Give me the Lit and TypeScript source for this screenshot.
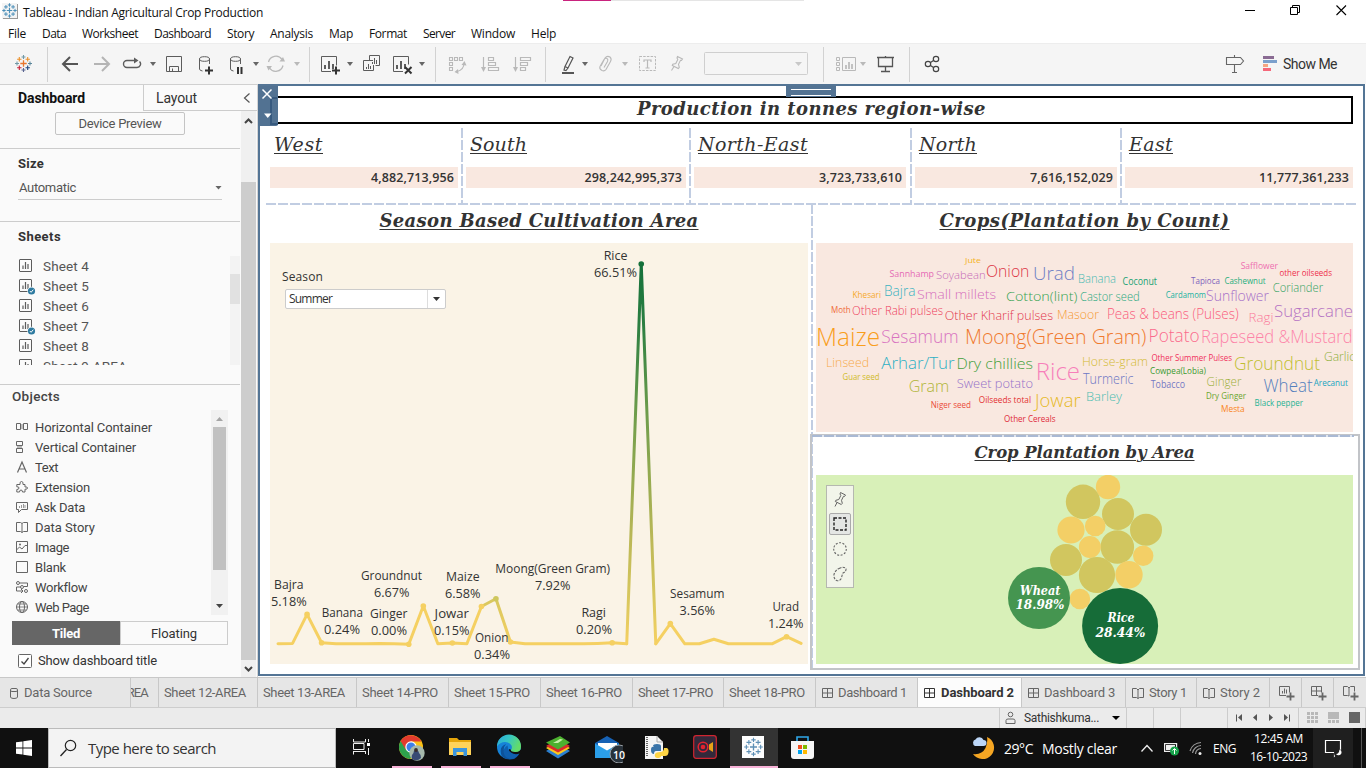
import { LitElement, html, svg, css } from "lit";
import { customElement, property } from "lit/decorators.js";

/* A line of text whose tracking is set so that it fills a given width. */
@customElement("fit-text")
class FitText extends LitElement {
  @property({ type: Number }) w = 0;
  @property() text = "";
  static styles = css`
    :host { display: block; white-space: pre; flex: none; }
  `;
  render() {
    return html`<span>${this.text}</span>`;
  }
  firstUpdated() {
    const s = this.renderRoot.querySelector("span") as HTMLElement;
    if (this.w) {
      const n = s.getBoundingClientRect().width;
      this.style.letterSpacing = `${(this.w - n) / this.text.length}px`;
    }
  }
}

const t = (text: string, w: number, cls = "") => html`<fit-text class=${cls} .text=${text} .w=${w}></fit-text>`;
const ic = (x: number, y: number, w: number, h: number, body: unknown) =>
  html`<svg class="ic" width=${w} height=${h} viewBox="${x} ${y} ${w} ${h}" fill="none">${body}</svg>`;

const plus = (x: number, y: number, r: number, c: string, sw = 1) =>
  svg`<path d="M${x - r} ${y}H${x + r}M${x} ${y - r}V${y + r}" stroke=${c} stroke-width=${sw}/>`;

const tableauMark = (x: number, y: number, s: number, cs: string[], sw = 1) => svg`
  ${plus(x, y, 3.2 * s, cs[0], sw * 1.2)}
  ${plus(x, y - 6.5 * s, 2 * s, cs[1], sw)}${plus(x, y + 6.5 * s, 2 * s, cs[2], sw)}
  ${plus(x - 6.5 * s, y, 2 * s, cs[3], sw)}${plus(x + 6.5 * s, y, 2 * s, cs[4], sw)}
  ${plus(x - 4.2 * s, y - 4.2 * s, 2.2 * s, cs[5], sw)}${plus(x + 4.2 * s, y - 4.2 * s, 2.2 * s, cs[6], sw)}
  ${plus(x - 4.2 * s, y + 4.2 * s, 2.2 * s, cs[7], sw)}${plus(x + 4.2 * s, y + 4.2 * s, 2.2 * s, cs[8], sw)}`;
const blues = (c: string) => Array(9).fill(c);

const D = "#5c5c5c";
const L = "#b9b9b9";
const caret = (x: number, c = "#666") => ic(x, 43, 8, 41, svg`<path d="M${x + 1} 62h6l-3 4z" fill=${c}/>`);
const sep = () => html`<i class="sep"></i>`;
const bars = (x: number, y: number, c: string) =>
  svg`<path d="M${x} ${y}v-4M${x + 4} ${y}v-8M${x + 8} ${y}v-5" stroke=${c} stroke-width="2"/>`;

const toolbar = () => html`
  ${ic(12, 43, 24, 41, tableauMark(23.5, 63.5, 1, ["#e8762c", "#7199a6", "#5b6591", "#7199a6", "#5b879b", "#eb912c", "#eb912c", "#c72037", "#1f457e"], 1.1))}
  ${sep()}
  ${ic(60, 43, 20, 41, svg`<path d="M78 64H63.5M70 57l-7 7 7 7" stroke="#555" stroke-width="2"/>`)}
  ${ic(92, 43, 20, 41, svg`<path d="M94 64h14.500M102 57l7 7-7 7" stroke="#b4b4b4" stroke-width="2"/>`)}
  ${ic(122, 43, 20, 41, svg`<path d="M135 60.500H127a3.500 3.500 0 0 0 0 7h10a3.500 3.500 0 0 0 2.500-6" stroke=${D} stroke-width="1.400"/><path d="M134 57.500l4.500 3-4.500 3z" fill=${D}/>`)}
  ${caret(149)}
  ${ic(165, 43, 18, 41, svg`<path d="M166.500 56.500h15v15h-15zM169.500 71.500v-5h9v5M172.500 71v-2.500" stroke=${D}/>`)}
  ${ic(197, 43, 18, 41, svg`<ellipse cx="204.500" cy="59" rx="5" ry="2.300" stroke=${D}/><path d="M199.500 59v10q0 1.500 3 2M209.500 59v5" stroke=${D}/><path d="M205 70.500h8M209 66.500v8" stroke="#333" stroke-width="2"/>`)}
  ${ic(228, 43, 18, 41, svg`<ellipse cx="235.500" cy="59" rx="5" ry="2.300" stroke=${D}/><path d="M230.500 59v10q0 1.500 3 2M240.500 59v5" stroke=${D}/><path d="M238 67v7M241.500 67v7" stroke="#333" stroke-width="2"/>`)}
  ${caret(252)}
  ${ic(266, 43, 20, 41, svg`<path d="M268.500 62a7.500 7.500 0 0 1 13.500-2.500M283 65.500a7.500 7.500 0 0 1-13.500 2.500" stroke=${L} stroke-width="1.300"/><path d="M279.500 61.500h5.500l-2-4.500zM272 66h-5.500l2 4.500z" fill=${L}/>`)}
  ${caret(293, L)}${sep()}
  ${ic(320, 43, 22, 41, svg`<path d="M331 71.500h-9.500v-15h15v9" stroke=${D}/>${bars(325, 69, D)}<path d="M332 70.500h8M336 66.500v8" stroke="#333" stroke-width="2"/>`)}
  ${caret(346)}
  ${ic(362, 43, 20, 41, svg`<path d="M369.500 60v-4.500h10v10h-4M373 60.500h-9.500v10h10V65" stroke=${D}/><path d="M372.500 64v-2M374.500 64v-6M376.500 64v-4M366.500 69v-2M368.500 69v-5M370.500 69v-3" stroke=${D}/>`)}
  ${ic(392, 43, 22, 41, svg`<path d="M403 71.500h-9.500v-15h15v8" stroke=${D}/>${bars(397, 69, D)}<path d="M405 67l6.500 6.500M411.500 67l-6.500 6.500" stroke="#333" stroke-width="2"/>`)}
  ${caret(418)}${sep()}
  ${ic(448, 43, 20, 41, svg`<path d="M449.500 57.500h3v3h-3zM454.500 57.500h3v3h-3zM459.500 57.500h3v3h-3zM449.500 62.500h3v3h-3zM449.500 67.500h3v3h-3zM464 63q0 7-7 8.500" stroke=${L} stroke-width="1.100"/><path d="M461.500 65l3-4 2 4.500zM458 69l-3.500 3 4 2z" fill=${L}/>`)}
  ${ic(480, 43, 20, 41, svg`<path d="M483.500 57v12M488.500 57.500h5v3h-5zM488.500 62.500h7v3h-7zM488.500 67.500h10v3h-10z" stroke=${L} stroke-width="1.200"/><path d="M481 67h5l-2.500 5z" fill=${L}/>`)}
  ${ic(512, 43, 20, 41, svg`<path d="M515.500 57v12M520.500 57.500h10v3h-10zM520.500 62.500h7v3h-7zM520.500 67.500h5v3h-5z" stroke=${L} stroke-width="1.200"/><path d="M513 67h5l-2.500 5z" fill=${L}/>`)}
  ${sep()}
  ${ic(560, 43, 18, 41, svg`<path d="M570 56.500l3 1.500-5 10-3-1.500zM565 66.500l-1 3.500 2 .5 2-2.500" stroke="#555" stroke-width="1.200"/><path d="M562 73h12" stroke="#555" stroke-width="2"/>`)}
  ${caret(581)}
  ${ic(598, 43, 16, 41, svg`<path d="M601 66l4-8q2-2.500 5-1 2 2 .5 4.500l-4.500 8q-1.500 2-4 1-3-1.500-2-4l4-7q1.500-2 3-1 1.500 1 .5 3l-3.500 6" stroke=${L} stroke-width="1.100"/>`)}
  ${caret(621, L)}
  ${ic(638, 43, 20, 41, svg`<path d="M639.500 56.500h16v14h-16z" stroke=${L} stroke-dasharray="2.500 1.200"/><path d="M644 62v-2h7v2M647.500 60v8M645.500 68h4" stroke=${L} stroke-width="1.200"/>`)}
  ${ic(669, 43, 18, 41, svg`<path d="M677.500 56.500l5 2.500-1 1.500-1-.2-2 4 .8 3-1 1.200-6-3 .5-1.200 3-.8 2-4-.8-1.500zM674 66.500l-2.500 4" stroke=${L} stroke-width="1.100"/>`)}
  ${ic(704, 43, 106, 41, svg`<rect x="704.500" y="52.500" width="103" height="22" rx="1" stroke="#cfcfcf"/><path d="M795 62h7l-3.500 4z" fill="#c8c8c8"/>`)}
  ${sep()}
  ${ic(835, 43, 22, 41, svg`<path d="M836.500 57.500h3v3h-3zM836.500 62.500h3v3h-3zM836.500 67.500h3v3h-3zM842.500 57.500h13v13h-13z" stroke=${L}/><path d="M846 69v-4M849 69v-7M852 69v-5" stroke=${L} stroke-width="1.700"/>`)}
  ${caret(859, L)}
  ${ic(876, 43, 20, 41, svg`<path d="M877 57.500h17M878.500 58v8.500h14V58M885.500 56v1M885.500 67v4M881 71.500h9" stroke="#555" stroke-width="1.300"/>`)}
  ${sep()}
  ${ic(924, 43, 18, 41, svg`<g stroke="#444" stroke-width="1.200"><circle cx="928" cy="64" r="2.700"/><circle cx="936" cy="59" r="2.700"/><circle cx="936" cy="69" r="2.700"/><path d="M930.500 62.500l3-2M930.500 65.500l3 2"/></g>`)}
  ${ic(1225, 43, 20, 41, svg`<path d="M1226.500 57.500h14l3 3.500-3 3.500h-14zM1234.500 55v2M1234.500 65v7M1232 72.500h5" stroke="#666" stroke-width="1.100"/>`)}
  <div class="showme">
    ${ic(1263, 43, 15, 41, svg`<path d="M1263 56h11v3h-11z" fill="#8a6b93"/><path d="M1263 60h14v3h-14z" fill="#7ba0cc"/><path d="M1263 64h5v3h-5z" fill="#f4a582"/><path d="M1263 68h8v3h-8z" fill="#f5687a"/>`)}
    ${t("Show Me", 54)}
  </div>`;

const sheetIcon = (used: boolean) => html`<svg class="ic" width="18" height="18" viewBox="0 0 18 18" fill="none">
  <rect x="1.500" y="2.500" width="12" height="12" stroke=${D} rx=".5"/><path d="M5 12V8.500M7.500 12V5M10 12V7" stroke=${D} stroke-width="1.200"/>
  ${used ? svg`<circle cx="13.500" cy="14" r="4.200" fill="#fafafa"/><circle cx="13.500" cy="14" r="3.600" fill="#2f7ba0"/><path d="M11.800 14l1.300 1.300 2.200-2.600" stroke="#fff"/>` : ""}</svg>`;

const sheets: [string, number, boolean][] = [
  ["Sheet 4", 46, false], ["Sheet 5", 46, true], ["Sheet 6", 46, false], ["Sheet 7", 46, true], ["Sheet 8", 46, false], ["Sheet 9-AREA", 84, false],
];

const G = "#666";
const objects: [string, number, unknown][] = [
  ["Horizontal Container", 117, svg`<path d="M.5 3.500h4v6h-4zM7.500 3.500h4v6h-4z" stroke=${G}/><path d="M5 4h2v5H5z" fill="#bbb"/>`],
  ["Vertical Container", 101, svg`<path d="M.5 1.500h6v4h-6zM.5 8.500h6v4h-6z" stroke=${G}/><path d="M1 6h5v2H1z" fill="#bbb"/>`],
  ["Text", 23, svg`<path d="M1.500 12.500L6 2l4.500 10.500M3 9h6" stroke=${G} stroke-width="1.200"/>`],
  ["Extension", 55, svg`<path d="M4 4.500q-.5-3 1.500-3t1.500 3h2v2.500q2.500-.5 2.500 1t-2.500 1.200v2.800H6.500q0-2-1.500-2t-1.500 2H.8V9.500Q3 9.500 3 8T.8 6.800V4.500z" stroke=${G}/>`],
  ["Ask Data", 50, svg`<path d="M.5 2.500h11v7h-6l-3 3v-3h-2z" stroke=${G}/><path d="M3.500 8V6M5.500 8V5M7.500 8V4M9 8V5" stroke="#999"/>`],
  ["Data Story", 60, svg`<path d="M6 3.500v9M6 3.500L4.500 2.500h-4v9h4l1.500 1 1.500-1h4v-9h-4z" stroke=${G}/>`],
  ["Image", 34, svg`<path d="M.5 1.500h11v11H.5zM.5 10l3-3 2.500 2 3-3.500h2.500" stroke=${G}/><circle cx="4" cy="4.500" r="1" fill=${G}/>`],
  ["Blank", 31, svg`<path d="M.5 1.500h11v11H.5z" stroke=${G}/>`],
  ["Workflow", 52, svg`<circle cx="2" cy="3" r="1.500" stroke=${G}/><circle cx="10" cy="11" r="1.500" stroke=${G}/><circle cx="6" cy="7" r="1.500" stroke=${G}/><path d="M4 3h7.500v3.500H8M4.500 7h-4v4H7M5 9l2 2-2 2" stroke=${G}/>`],
  ["Web Page", 54, svg`<circle cx="6" cy="7" r="5.500" stroke=${G}/><ellipse cx="6" cy="7" rx="2.500" ry="5.500" stroke=${G}/><path d="M.5 7h11M1.500 4h9M1.500 10h9" stroke=${G} stroke-width=".8"/>`],
];

const sidebar = () => html`
  <aside class="side">
    <div class="side-tabs">
      <div class="st-active">${t("Dashboard", 67)}</div>
      <div class="st-other">${t("Layout", 41)}${ic(243, 90, 8, 14, svg`<path d="M249.500 92.500l-5 4.500 5 4.500" stroke="#555" stroke-width="1.200"/>`)}</div>
    </div>
    <div class="side-body">
      <div class="side-scroll">
        <section class="s-device"><div class="device">${t("Device Preview", 83)}</div></section>
        <section class="s-size">
          <div class="h">${t("Size", 26)}</div>
          <div class="select">${t("Automatic", 57)}<i class="tri"></i></div>
        </section>
        <section class="s-sheets">
          <div class="h">${t("Sheets", 43)}</div>
          <div class="sheetbox">
            <div class="sheetlist">${sheets.map(([n, w, u]) => html`<div class="sheet">${sheetIcon(u)}${t(n, w)}</div>`)}</div>
            <div class="minitrack"><i></i></div>
          </div>
        </section>
        <section class="s-objects">
          <div class="oh">${t("Objects", 48)}</div>
          <div class="objbox">
            <div class="objlist">${objects.map(([n, w, b]) => html`<div class="obj"><svg class="ic" width="12" height="14" viewBox="0 0 12 14" fill="none">${b}</svg>${t(n, w)}</div>`)}</div>
            <div class="objtrack"><b class="up"></b><i></i><b class="down"></b></div>
          </div>
          <div class="toggle"><div class="on">${t("Tiled", 28)}</div><div class="off">${t("Floating", 46)}</div></div>
          <div class="check">${ic(0, 0, 14, 14, svg`<rect x=".5" y=".5" width="13" height="13" rx="1" stroke="#666" fill="#fff"/><path d="M3.500 7.500l2.500 2.500 4.500-6" stroke="#444" stroke-width="1.300"/>`)}${t("Show dashboard title", 119)}</div>
        </section>
      </div>
      <div class="vtrack">
        ${ic(0, 0, 15, 19, svg`<path d="M4 12l3.500-3.500L11 12" stroke="#444" stroke-width="2"/>`)}
        <i></i>
        ${ic(0, 0, 15, 17, svg`<path d="M4 7l3.500 3.500L11 7" stroke="#444" stroke-width="2"/>`)}
      </div>
    </div>
  </aside>`;

const fit = (s: string, x: number, x2: number, y: number, size: number, fill: string) =>
  svg`<text x=${x} y=${y} font-size=${size} font-weight=${size > 11 ? 300 : 400} fill=${fill} textLength=${x2 - x} lengthAdjust="spacingAndGlyphs">${s}</text>`;
const label = (s: string, x: number, x2: number, y: number, size: number, fill: string) =>
  svg`<text x=${x} y=${y} font-size=${size} fill=${fill} textLength=${x2 - x} lengthAdjust="spacingAndGlyphs">${s}</text>`;

/* text, left, right, baseline, size, colour */
const words: [string, number, number, number, number, string][] = [
  ["Jute", 965, 981, 262.7, 8, "#f5b324"], ["Sannhamp", 889.5, 934, 277, 9.5, "#e56bb5"], ["Soyabean", 936, 985.6, 279, 11.5, "#c76cb9"],
  ["Onion", 986, 1029.4, 277.3, 17, "#dc3545"], ["Urad", 1033, 1075, 280, 19, "#6f7fc4"], ["Banana", 1078, 1116, 283, 12, "#45b8b0"],
  ["Coconut", 1122.6, 1157, 285, 10, "#20a374"], ["Safflower", 1240.7, 1278, 269, 9, "#ee6fb0"], ["other oilseeds", 1279.5, 1332, 276, 9, "#ee2f4c"],
  ["Tapioca", 1191, 1220, 283.5, 9, "#8065bd"], ["Cashewnut", 1224.4, 1265.7, 284, 9, "#1fae7d"], ["Coriander", 1272.8, 1323, 292, 12.5, "#32a363"],
  ["Khesari", 852.5, 881, 298, 9, "#f6a92b"], ["Bajra", 884, 915.5, 295.5, 14, "#3bb3c0"], ["Small millets", 917, 996, 298.500, 13.5, "#d56fbd"],
  ["Cotton(lint)", 1006, 1077.4, 301, 13.5, "#35a351"], ["Castor seed", 1080, 1139.7, 300.5, 12, "#2aa981"], ["Cardamom", 1165.7, 1206, 298, 9, "#20b2a0"],
  ["Sunflower", 1206, 1269, 301, 14, "#a873c9"], ["Moth", 831, 850.7, 313, 9, "#ef6a3a"], ["Other Rabi pulses", 852, 943, 314.5, 13, "#ee3c5c"],
  ["Other Kharif pulses", 944.7, 1053, 319.5, 13, "#e2364b"], ["Masoor", 1057, 1099, 319, 13, "#f59a33"], ["Peas & beans (Pulses)", 1107, 1238.6, 319, 14, "#f95b7c"],
  ["Ragi", 1248.6, 1273.5, 322, 13.5, "#fb7c9c"], ["Sugarcane", 1274, 1353, 316.5, 17, "#b573c3"], ["Maize", 816, 880, 346, 25, "#f99e1c"],
  ["Sesamum", 881.3, 958.5, 342.5, 18, "#d873c0"], ["Moong(Green Gram)", 965, 1146.4, 344, 20, "#f07a2e"], ["Potato", 1148.6, 1199.5, 341.5, 18, "#fb6a8c"],
  ["Rapeseed &Mustard", 1201, 1352.5, 343, 18, "#fd83a8"], ["Linseed", 826, 869, 367, 13, "#f7ab4c"], ["Arhar/Tur", 881.3, 954.6, 369, 17, "#2eb0c4"],
  ["Dry chillies", 956.4, 1033, 369, 15, "#45a03d"], ["Rice", 1035.8, 1080, 379.5, 24, "#f77fba"], ["Horse-gram", 1082, 1148, 365.5, 13, "#d3bb35"],
  ["Other Summer Pulses", 1151.4, 1232, 361, 9, "#f0305c"], ["Cowpea(Lobia)", 1150, 1206, 374, 9, "#3a9a2f"], ["Groundnut", 1234, 1320, 369.5, 19, "#bfbf30"],
  ["Garlic", 1324, 1355, 361, 13, "#8dae38"], ["Guar seed", 842.5, 879.5, 380, 9, "#d0bb27"], ["Gram", 908.7, 949.3, 392, 17, "#b0b537"],
  ["Sweet potato", 956.8, 1033, 388, 13, "#9471c9"], ["Turmeric", 1083, 1133.6, 384, 14, "#6c76c4"], ["Tobacco", 1150.7, 1185, 388, 11, "#7579c4"],
  ["Ginger", 1206.6, 1241.5, 386, 13, "#9cb03a"], ["Wheat", 1263.5, 1312.6, 392, 18, "#5580bd"], ["Arecanut", 1313.7, 1348, 386, 9, "#20a5c0"],
  ["Niger seed", 930.8, 971, 408, 9, "#ea4b3a"], ["Oilseeds total", 978.8, 1031, 403, 9, "#e33030"], ["Jowar", 1035, 1080.6, 407, 18, "#e6b91f"],
  ["Barley", 1086, 1122, 401, 13, "#4abdb0"], ["Dry Ginger", 1206, 1246, 399, 9.5, "#6aa52f"], ["Mesta", 1221, 1244.7, 412, 9.5, "#fa8420"],
  ["Black pepper", 1254.6, 1303, 406, 9.5, "#25b394"], ["Other Cereals", 1004, 1055.7, 422, 9, "#e02a3a"],
];

/* share of each crop as the y coordinate of its mark */
const base = 643.8;
const series = Array.from({ length: 37 }, () => base);
Object.assign(series, { 1: 643.4, 2: 614.4, 3: 642.7, 7: 643.4, 9: 644.2, 10: 606, 12: 643, 14: 606.5, 15: 598.7, 16: 642, 22: 643.4, 23: 642.8, 25: 264, 27: 623.6, 30: 639.3, 35: 636.7, 36: 643.4 });
const sx = (i: number) => 278 + 14.53 * i;
const run = (a: number, b: number) => series.slice(a, b + 1).map((y, k) => `${sx(a + k)},${y}`).join(" ");
const Y = "#f5d062";

const marks: [string, string, number, number, number, number, number][] = [
  ["Bajra", "5.18%", 274, 303.5, 589, 271, 306.7], ["Banana", "0.24%", 321.7, 363, 617, 324, 360], ["Ginger", "0.00%", 370, 407.4, 618, 371, 407],
  ["Groundnut", "6.67%", 361, 422, 580, 374, 409.5], ["Maize", "6.58%", 446, 479.6, 581, 445, 480.6], ["Jowar", "0.15%", 434.6, 469, 618, 434, 469.6],
  ["Onion", "0.34%", 475, 508.5, 642, 474, 510], ["Moong(Green Gram)", "7.92%", 495.3, 610, 573, 535, 570.6], ["Ragi", "0.20%", 581.4, 606, 617, 576, 612],
  ["Sesamum", "3.56%", 670, 724.5, 598, 679.6, 715], ["Urad", "1.24%", 772.4, 799.2, 611, 768, 803.5], ["Rice", "66.51%", 603.7, 627.5, 260, 594, 637],
];

const lineChart = () => html`<svg class="plot" width="538" height="421" viewBox="270 243 538 421" fill="none">
  <defs><linearGradient id="g" gradientUnits="userSpaceOnUse" x1="0" y1="264" x2="0" y2="644">
    <stop offset="0" stop-color="#14703a"/><stop offset=".16" stop-color="#2b7f42"/><stop offset=".4" stop-color="#6f9d4b"/>
    <stop offset=".73" stop-color="#bcb857"/><stop offset=".88" stop-color="#d8c75e"/><stop offset="1" stop-color="#f5d062"/>
  </linearGradient></defs>
  <g stroke-width="3" stroke-linejoin="round" stroke-linecap="round">
    <polyline points=${run(0, 14)} stroke=${Y}/><polyline points=${run(16, 24)} stroke=${Y}/><polyline points=${run(26, 36)} stroke=${Y}/>
    <polyline points=${run(14, 16)} stroke="url(#g)"/><polyline points=${run(24, 26)} stroke="url(#g)"/>
  </g>
  ${[2, 3, 9, 10, 12, 14, 16, 23, 27, 35].map((i) => svg`<circle cx=${sx(i)} cy=${series[i]} r="2.800" fill=${Y}/>`)}
  <circle cx=${sx(15)} cy=${series[15]} r="2.800" fill="#cfc75d"/><circle cx=${sx(25)} cy=${series[25]} r="2.800" fill="#14703a"/>
  ${marks.map(([n, p, a, b, y, c, d]) => svg`${label(n, a, b, y, 12.5, "#333")}${label(p, c, d, y + 17, 12.5, "#333")}`)}
</svg>`;

const bubbles: [number, number, number, string][] = [
  [1108, 487, 12.2, "#f3cf66"], [1083, 501.8, 17.2, "#d1c65f"], [1118, 514, 16, "#d1c65f"], [1071, 530, 13.6, "#f3cf66"], [1095.2, 526, 10.3, "#f3cf66"],
  [1146, 529.8, 16, "#d1c65f"], [1117.3, 547, 16.8, "#d1c65f"], [1089.9, 547, 11, "#f3cf66"], [1143.2, 555.8, 10.2, "#f3cf66"], [1066, 560, 16, "#d1c65f"],
  [1097, 575, 18.1, "#d1c65f"], [1129, 574.8, 13.7, "#f3cf66"], [1079.9, 599, 10.3, "#f3cf66"], [1039, 598, 31, "#459550"], [1120.1, 626, 38, "#166c38"],
];

const tool = (b: unknown, on = false) => html`<div class=${on ? "tool sel" : "tool"}><svg class="ic" width="20" height="20" viewBox="0 0 20 20" fill="none">${b}</svg></div>`;

const region = (n: string, w: number, v: string, vw: number) => html`<div class="region">
  <div class="rname">${t(n, w)}</div><div class="rbar">${t(v, vw)}</div></div>`;
const vd = () => html`<i class="vdash"></i>`;

const dashboard = () => html`
  <main class="frame">
    <div class="grip"></div>
    <div class="handle">${ic(0, 0, 18, 40, svg`<path d="M17 12H11v26h7" stroke="#2c5078" stroke-width="2" opacity=".7"/><path d="M2.500 3.500l9 9M11.500 3.500l-9 9" stroke="#fff" stroke-width="1.500"/><path d="M4 27.500h7.500l-3.750 4.500z" fill="#fff"/>`)}</div>
    <div class="title">${t("Production in tonnes region-wise", 349)}</div>
    <div class="regions">
      ${region("West", 49, "4,882,713,956", 83)}${vd()}${region("South", 57, "298,242,995,373", 97.5)}${vd()}
      ${region("North-East", 110, "3,723,733,610", 83)}${vd()}${region("North", 58, "7,616,152,029", 83)}${vd()}${region("East", 44, "11,777,361,233", 90)}
    </div>
    <div class="hdash"></div>
    <div class="lower">
      <div class="left">
        <div class="ptitle u">${t("Season Based Cultivation Area", 319)}</div>
        <div class="chart">
          ${lineChart()}
          <div class="filter">
            <div class="fl">${t("Season", 41)}</div>
            <div class="combo"><div>${t("Summer", 43)}</div><b><i class="tri dk"></i></b></div>
          </div>
        </div>
      </div>
      <i class="vdash tall"></i>
      <div class="right">
        <div class="ptitle u">${t("Crops(Plantation by Count)", 290)}</div>
        <svg class="plot cloud" width="537" height="189" viewBox="816 243 537 189">${words.map((w) => fit(...w))}</svg>
        <div class="panel">
          <div class="hdash in"></div>
          <div class="ptitle small u">${t("Crop Plantation by Area", 220)}</div>
          <div class="area">
            <svg class="plot" width="537" height="189" viewBox="816 475 537 189">
              ${bubbles.map(([x, y, r, c]) => svg`<circle cx=${x} cy=${y} r=${r} fill=${c}/>`)}
              <g class="blabel">
                ${label("Wheat", 1020, 1060.5, 594.5, 12, "#fff")}${label("18.98%", 1015.5, 1064.5, 609.300, 12, "#fff")}
                ${label("Rice", 1107.5, 1134.5, 622.3, 12, "#fff")}${label("28.44%", 1095.5, 1145.5, 637.3, 12, "#fff")}
              </g>
            </svg>
            <div class="tools">
              ${tool(svg`<path d="M10.500 3.500l5 2.500-1 1.500-1-.2-2 4 .8 3-1 1.200-6-3 .5-1.200 3-.8 2-4-.8-1.500zM7 13.500l-2 4" stroke="#666"/>`)}
              ${tool(svg`<rect x="4" y="4" width="12" height="12" stroke="#222" stroke-width="1.400" stroke-dasharray="3 1.500"/>`, true)}
              ${tool(svg`<circle cx="10" cy="10" r="6.300" stroke="#666" stroke-width="1.100" stroke-dasharray="2 1.500"/>`)}
              ${tool(svg`<path d="M9 4.500q4-2.500 7 0 .5 3-3 4.500-1 2-1.500 5-1.500 3.500-5 2.500-3-2-2.500-6Q5 6.500 9 4.500z" stroke="#666" stroke-width="1.100" stroke-dasharray="2.500 1.300"/>`)}
            </div>
          </div>
        </div>
      </div>
    </div>
  </main>`;

const T = "#666";
const cyl = svg`<path d="M.5 3v7q0 1.500 3.500 1.500T7.500 10V3" stroke=${T}/><rect x=".5" y="1.500" width="7" height="3" rx="1.400" stroke=${T}/>`;
const dashI = (c = T) => html`<svg class="ic" width="11" height="12" viewBox="0 0 11 12" fill="none"><path d="M.5 1.500h10v9H.5zM5.500 1.500v9M.5 6h10" stroke=${c}/></svg>`;
const bookI = () => html`<svg class="ic" width="12" height="12" viewBox="0 0 12 12" fill="none"><path d="M6 3v8.500M6 3L4.500 1.500h-4v9h4L6 11.500l1.500-1h4v-9h-4z" stroke=${T}/></svg>`;
const newI = (b: unknown) => html`<div class="tab nw"><svg class="ic" width="17" height="16" viewBox="0 0 17 16" fill="none">${b}<path d="M7.500 11.500h8M11.500 7.500v8" stroke=${T} stroke-width="1.800"/></svg></div>`;

const tabs = () => html`<nav class="tabs">
  <div class="tab ds"><svg class="ic" width="8" height="12" viewBox="0 0 8 12" fill="none">${cyl}</svg>${t("Data Source", 68)}</div>
  <div class="tab cut">${t("AREA", 29)}</div>
  <div class="tab">${t("Sheet 12-AREA", 82)}</div><div class="tab">${t("Sheet 13-AREA", 82)}</div>
  <div class="tab">${t("Sheet 14-PRO", 76)}</div><div class="tab">${t("Sheet 15-PRO", 76)}</div><div class="tab">${t("Sheet 16-PRO", 76)}</div>
  <div class="tab">${t("Sheet 17-PRO", 75)}</div><div class="tab">${t("Sheet 18-PRO", 76)}</div>
  <div class="tab ico">${dashI()}${t("Dashboard 1", 69)}</div>
  <div class="tab ico act">${dashI("#333")}${t("Dashboard 2", 73)}</div>
  <div class="tab ico">${dashI()}${t("Dashboard 3", 71)}</div>
  <div class="tab ico">${bookI()}${t("Story 1", 38)}</div><div class="tab ico">${bookI()}${t("Story 2", 40)}</div>
  ${newI(svg`<path d="M7 10.500H.5v-9h10v6M3.500 8.500V6M5.500 8.500v-5M7.500 8.500v-4" stroke=${T}/>`)}
  ${newI(svg`<path d="M7 10.500H.5v-9h10v6M5.500 1.500v9M.5 6h10" stroke=${T}/>`)}
  ${newI(svg`<path d="M6 3v8L4.500 10.500h-4v-9h4L6 3l1.500-1.500h4v5" stroke=${T}/>`)}
</nav>`;

const status = () => html`<div class="status">
  <div class="st"></div>
  <div class="st user">${ic(0, 0, 11, 14, svg`<circle cx="5.500" cy="3.500" r="2.300" stroke=${T}/><path d="M1 12.500v-3q0-1.500 2-1.500h5q2 0 2 1.500v3z" stroke=${T}/>`)}${t("Sathishkuma...", 75)}<i class="tri bk"></i></div>
  <div class="st"></div><div class="st"></div><div class="st"></div>
  <div class="st">${ic(1228, 709, 69, 18, svg`<path d="M1236.500 714.500v7M1289.500 714.500v7" stroke="#555"/><path d="M1242 714v7l-4-3.500zM1257 714v7l-4-3.500zM1269 714v7l4-3.500zM1284 714v7l4-3.500z" fill="#555"/>`)}</div>
  <div class="st">${ic(1299, 709, 67, 18, svg`<g fill="#b8b8b8">${[0, 1, 2].map((r) => [0, 1, 2].map((c) => svg`<rect x=${1307 + c * 4} y=${712 + r * 4} width="3" height="3"/>`))}<rect x="1328" y="712" width="11" height="7"/>${[0, 1, 2].map((c) => svg`<rect x=${1328 + c * 4} y="720" width="3" height="3"/>`)}</g><rect x="1349" y="712" width="11" height="11" fill="#666"/>`)}</div>
</div>`;

const app = (x: number, b: unknown, cls = "") => html`<div class="app ${cls}">${ic(x - 14, 734, 30, 30, b)}</div>`;

const taskbar = () => html`<footer class="task">
  <div class="start">${ic(16, 740, 16, 16, svg`<path d="M16 742.300l6.500-.9v6.200H16zM23.300 741.200L32 740v7.600h-8.700zM16 748.400h6.500v6.200l-6.500-.9zM23.300 748.400H32v7.600l-8.700-1.200z" fill="#fff"/>`)}</div>
  <div class="search">${ic(59, 738, 18, 20, svg`<circle cx="70.500" cy="745.500" r="5.200" stroke="#222" stroke-width="1.200"/><path d="M66.500 749.500l-6 6.500" stroke="#222" stroke-width="1.300"/>`)}${t("Type here to search", 128)}</div>
  <div class="app view">${ic(345, 734, 30, 30, svg`<path d="M352.500 740v3M352.500 752v3M364.500 740v3M364.500 752v3M352.500 740.500v2.500h12M352.500 755.500V752.500h12M352.500 744.500h10.500v6h-10.500zM367.500 740v3M367.500 749v7" stroke="#eee"/><path d="M366 744h3v3h-3z" fill="#fff"/>`)}</div>
  ${app(411, svg`<circle cx="411" cy="748" r="12" fill="#fbc116"/><path d="M400.600 742A12 12 0 0 0 410 760l5-9-4-3z" fill="#2da24c"/><path d="M400.600 742A12 12 0 0 1 421.400 742.500H411l-5 8.500z" fill="#e33b2e"/><circle cx="411" cy="748" r="5.700" fill="#fff"/><circle cx="411" cy="748" r="4.500" fill="#3f7ee8"/><circle cx="417" cy="754" r="7.700" fill="#a5b8ab"/><path d="M416 751q2.500 0 3 3 2.500 2 2 5a7.700 7.700 0 0 1-9 1q-1-4 1.500-6 0-3 2.500-3z" fill="#394b74"/><circle cx="416" cy="751" r="1.900" fill="#3a2d2b"/>`, "run")}
  ${app(460, svg`<path d="M449 739h8l2 2h12v15h-22z" fill="#e5a50a"/><path d="M449 743h22v13h-22z" fill="#ffd35a"/><path d="M453 757v-8h14v8h-3.500v-4h-7v4z" fill="#3b95dd"/>`, "run")}
  ${app(509, svg`<defs><linearGradient id="e" x1="0" y1="0" x2="1" y2=".4"><stop offset="0" stop-color="#2aa7dc"/><stop offset=".5" stop-color="#35c6c4"/><stop offset="1" stop-color="#63dc69"/></linearGradient></defs>
    <circle cx="509" cy="748" r="12" fill="#1683d8"/>
    <path d="M506 745q-5 6 1 12 5 4 11 .5A12 12 0 0 1 502 757.500Q498 748 506 745z" fill="#0d5299"/>
    <path d="M513 752q4 1.500 8 -1.500l1 4-4 4q-7 1-9.500-4-1-3 1-4.500z" fill="#101010"/>
    <path d="M511 753.500q4 3 8.500 1-3 5.500-9 5.500-6-1-7-7 0-4 4-6.500 0 4 3.500 7z" fill="#0f5fae"/>
    <path d="M497 747.500A12 12 0 0 1 521 747.500q0 5.500-5.500 5.500-5 0-4.500-2 1.500-2 .5-4.500-2-3.500-6.500-3.500-5 0-8 4.500z" fill="url(#e)"/>`, "run")}
  ${app(558, svg`<path d="M546 752l12 7.500 12-7.500-12-7z" fill="#2b7fd0"/><path d="M546 749l12 7 12-7-12-7z" fill="#fbc81c"/><path d="M546 747l12 6.500 12-6.500-12-7z" fill="#d92c2c"/><path d="M546 743.500l12 7 12-7-10-6.500z" fill="#4cb12f"/><path d="M553 744l7-4 3 .5-5 3.500z" fill="#c8f0a8"/>`)}
  ${app(607, svg`<path d="M595 744l12-7 12 7v15h-24z" fill="#1762b5"/><path d="M598 744h19v8h-19z" fill="#fff"/><path d="M595 744.500l12 7 12-7V759h-24z" fill="#2b9fe9"/><circle cx="619" cy="755" r="9" fill="#29323a" stroke="#9aa0a6"/>`, "mail")}
  ${app(656, svg`<path d="M645 737h12l6 6v17h-18z" fill="#f4f4f4"/><path d="M657 737v6h6" stroke="#aaa"/><path d="M647 738v20" stroke="#666" stroke-width="2" stroke-dasharray="1 1"/><path d="M653 747q0-2 4-2t4 2v5h-5q-2 0-2 3-3 0-3-4t3-3z" fill="#3a74a8"/><path d="M667 749q2 1 1.500 4.500T665 757h-4q0 2-4 2-3-1-2-4 1-2 5-2t4-4z" fill="#fdd444"/>`)}
  ${app(705, svg`<rect x="693.700" y="736.700" width="22.600" height="22.600" rx="2.500" fill="#33293b" stroke="#d02530" stroke-width="1.200"/><circle cx="703" cy="748" r="4.800" stroke="#e32330" stroke-width="1.500"/><circle cx="703" cy="748" r="2.300" fill="#e32330"/><path d="M713 743v10l-4-2.500v-5z" fill="#e8a117"/>`)}
  ${app(753, svg`<rect x="742" y="737" width="22" height="22" fill="#fdfdfd"/>${tableauMark(753.5, 748, 1.1, blues("#5d8fb5"), 1.1)}`, "run cur")}
  ${app(802, svg`<path d="M797 742v-4h11v4" stroke="#2fa7e8" stroke-width="1.600"/><path d="M791 742h23v15q0 3-3 3h-17q-3 0-3-3z" fill="#f6f6f6"/><path d="M798 746h4v4h-4z" fill="#f25022"/><path d="M803 746h4v4h-4z" fill="#7fba00"/><path d="M798 751h4v4h-4z" fill="#00a4ef"/><path d="M803 751h4v4h-4z" fill="#ffb900"/>`)}
  <div class="tray">
    ${ic(970, 734, 26, 28, svg`<path d="M987 737a11.500 11.500 0 1 1-14 17q9 1 12.500-6 2.500-6 1.500-11z" fill="#f5a623"/><path d="M975 746a3.500 3.500 0 0 1 .5-6.500 4.500 4.500 0 0 1 8 .5 3 3 0 0 1 0 6z" fill="#bcd6f7"/>`)}
    ${t("29°C", 29, "temp")}${t("Mostly clear", 75, "sky")}
    ${ic(1140, 740, 14, 16, svg`<path d="M1141.500 751.500l5.500-6 5.500 6" stroke="#eee" stroke-width="1.300"/>`)}
    ${ic(1163, 740, 17, 18, svg`<rect x="1164.600" y="744.600" width="12" height="7.800" stroke="#eee" stroke-width="1.200"/><path d="M1166 746h9v5h-9z" fill="#eee"/><circle cx="1174.500" cy="752" r="4.500" fill="#16a34a"/><path d="M1174.500 755v-5M1172.500 751.500l2-2 2 2" stroke="#fff"/>`)}
    ${ic(1189, 740, 14, 16, svg`<path d="M1190 751a12 12 0 0 1 11-8.500M1192.500 753a9 9 0 0 1 8.500-7.500M1195.500 754a6 6 0 0 1 5.500-5.500" stroke="#999" stroke-width="1.200"/><circle cx="1200" cy="753.500" r="1.500" fill="#eee"/>`)}
    ${t("ENG", 23, "eng")}
    <div class="clock">${t("12:45 AM", 49)}${t("16-10-2023", 57)}</div>
    <div class="note">${ic(1324, 738, 18, 20, svg`<path d="M1325.500 740.500h15v12h-3l-3 3.500v-3.500h-9z" stroke="#fff" stroke-width="1.200"/><circle cx="1338" cy="753" r="4" fill="#1f1f1f"/><path d="M1339.500 749.500a3 3 0 1 1-3.500 4.500q3 0 3.500-4.500z" fill="#fff"/>`)}</div>
    <i class="peek"></i>
  </div>
</footer>`;

@customElement("app-root")
class AppRoot extends LitElement {
  static styles = css`
    :host { display: flex; flex-direction: column; width: 1366px; height: 768px; overflow: hidden; position: relative; background: #fff; font-family: "Roboto", sans-serif; font-size: 13px; color: #444; }
    * { box-sizing: border-box; }
    .ic { display: block; flex: none; }
    .strip { position: absolute; left: 563px; top: 0; width: 241px; height: 1px; background: linear-gradient(90deg, #c9237e 48px, #e5e5e5 48px); }
    .bar { height: 24px; display: flex; align-items: center; padding: 0 16px 0 2px; font-family: "Open Sans", sans-serif; font-size: 12px; color: #111; gap: 5px; }
    .bar .win { margin-left: auto; }
    .menu { height: 19px; display: flex; align-items: center; padding-left: 8px; font-family: "Open Sans", sans-serif; font-size: 12px; color: #111; gap: 16px; }
    .toolbar { height: 41px; background: #f5f5f5; border-top: 1px solid #ededed; padding-left: 12px; display: grid; align-items: center; overflow: hidden;
      grid-template-columns: 35px 13px 32px 30px 27px 16px 32px 31px 24px 14px 27px 16px 11px 26px 16px 30px 26px 17px 13px 32px 32px 33px 15px 21px 17px 23px 17px 31px 35px 119px 12px 24px 17px 33px 15px 301px 38px 103px; }
    .toolbar > .ic, .showme .ic { margin-top: -1px; }
    .sep { display: block; width: 1px; height: 35px; background: #d2d2d2; align-self: start; margin-top: 3px; }
    .showme { display: flex; align-items: center; gap: 5px; font-size: 14px; color: #333; }
    .main { height: 593px; display: flex; }

    .side { width: 258px; background: #fafafa; border-top: 1px solid #d0d0d0; border-right: 1px solid #d4d4d4; display: flex; flex-direction: column; }
    .side-tabs { height: 26px; display: flex; font-size: 14px; }
    .st-active { width: 143px; padding-left: 18px; display: flex; align-items: center; font-weight: 700; color: #111; }
    .st-other { flex: 1; border-left: 1px solid #ccc; border-bottom: 1px solid #ccc; padding: 0 6px 0 12px; display: flex; align-items: center; justify-content: space-between; color: #333; }
    .side-body { flex: 1; display: flex; min-height: 0; }
    .side-scroll { width: 241px; }
    .vtrack { width: 15px; background: #f0f0f0; display: flex; flex-direction: column; }
    .vtrack i { height: 478px; background: #cdcdcd; }
    .vtrack .ic:first-child { margin-bottom: 52px; }
    .side section { width: 240px; border-bottom: 1px solid #ccc; color: #555; }
    .s-device { height: 38px; padding: 1px 0 0 55px; }
    .device { width: 130px; height: 23px; border: 1px solid #c4c4c4; border-radius: 2px; display: flex; align-items: center; justify-content: center; background: #fafafa; }
    .s-size { height: 73px; padding: 5px 18px 0; }
    .h { height: 20px; line-height: 20px; font-weight: 700; color: #333; font-size: 13px; }
    .select { margin-top: 3px; height: 23px; width: 204px; border-bottom: 1px solid #ccc; padding: 0 0 1px 1px; display: flex; align-items: center; justify-content: space-between; }
    .tri { display: block; width: 7px; height: 4px; background: #666; clip-path: polygon(0 0, 100% 0, 50% 100%); }
    .tri.dk { background: #333; } .tri.bk { background: #000; }
    .s-sheets { height: 163px; padding: 5px 0 0 18px; }
    .sheetbox { display: flex; height: 109px; margin-top: 9px; }
    .sheetlist { width: 212px; overflow: hidden; }
    .sheet { height: 20px; display: flex; align-items: center; gap: 7px; font-size: 13.5px; }
    .minitrack { width: 10px; background: #f3f3f3; padding-top: 18px; }
    .minitrack i { display: block; height: 30px; background: #e1e1e1; }
    .side .s-objects { border: 0; padding-left: 12px; color: #444; }
    .oh { height: 25px; line-height: 23px; font-size: 13.5px; font-weight: 500; }
    .objbox { height: 205px; display: flex; }
    .objlist { width: 199px; padding: 7px 0 0 4px; overflow: hidden; }
    .obj { height: 20px; display: flex; align-items: center; gap: 7px; }
    .objtrack { width: 17px; background: #f1f1f1; display: flex; flex-direction: column; align-items: center; }
    .objtrack i { width: 13px; height: 143px; background: #c1c1c1; }
    .objtrack .up { width: 7px; height: 4px; margin: 7px 0 6px; background: #a5a5a5; clip-path: polygon(0 100%, 100% 100%, 50% 0); }
    .objtrack .down { width: 7px; height: 4px; margin-top: 34px; background: #444; clip-path: polygon(0 0, 100% 0, 50% 100%); }
    .toggle { display: flex; margin-top: 6px; height: 24px; }
    .toggle div { width: 108px; display: flex; align-items: center; justify-content: center; }
    .on { background: #666; color: #fff; font-weight: 700; }
    .off { border: 1px solid #ccc; color: #333; }
    .check { display: flex; align-items: center; gap: 6px; padding: 8px 0 0 6px; color: #333; }

    .frame { width: 1107px; height: 592px; border: 2px solid #547595; background: #fff; position: relative; font-family: "DejaVu Serif", serif; color: #333; }
    .grip { position: absolute; left: 526px; top: 0; width: 50px; height: 11px; background: #537393; }
    .grip::before { content: ""; position: absolute; left: 5px; top: 3px; width: 40px; height: 5px; border: 1px solid #fff; border-width: 1px 0; }
    .handle { position: absolute; left: -2px; top: 0; width: 20px; height: 40px; padding-left: 2px; background: #527292; border-radius: 0 0 2px 0; }
    .title { margin: 10px 10px 0; height: 28px; border: 2px solid #000; display: flex; justify-content: center; align-items: center; padding-bottom: 3px; font-size: 18px; font-weight: 700; font-style: italic; }
    .regions { margin-left: 10px; height: 79px; display: grid; grid-template-columns: 188px 8px 220px 8px 212px 9px 202px 8px 228px; }
    .rname { height: 43px; padding: 8px 0 0 4px; display: flex; font-size: 19px; line-height: 24px; font-style: italic; text-decoration: underline; text-decoration-thickness: 1px; text-underline-offset: 2px; }
    .rbar { height: 21px; background: #f9e8e0; display: flex; align-items: center; justify-content: flex-end; padding-right: 4px; font-family: "Open Sans", sans-serif; font-weight: 600; font-size: 12.5px; }
    .vdash { display: block; width: 2px; margin: 4px auto 0; background: repeating-linear-gradient(180deg, #c1cde2 0 10px, transparent 10px 12px); }
    .hdash { height: 2px; margin: 0 7px 0 6px; background: repeating-linear-gradient(90deg, #c1cde2 0 10px, transparent 10px 12px); }
    .lower { display: grid; grid-template-columns: 551px 2px 550px; height: 469px; }
    .vdash.tall { margin: -1px 0 0; height: 465px; }
    .left { padding-left: 10px; }
    .ptitle { height: 38px; display: flex; justify-content: center; padding-top: 4px; line-height: 24px; font-size: 18px; font-weight: 700; font-style: italic; }
    .u { text-decoration: underline; text-decoration-thickness: 1px; text-underline-offset: 2px; }
    .left .ptitle { width: 538px; }
    .right > .ptitle { width: 537px; margin-left: 3px; }
    .chart { position: relative; width: 538px; height: 421px; background: #faf3e6; }
    .plot { display: block; font-family: "Open Sans", sans-serif; }
    .cloud { background: #f9e8e0; margin-left: 3px; }
    .filter { position: absolute; left: 12px; top: 26px; font-family: "Open Sans", sans-serif; font-size: 12px; line-height: 16px; color: #333; }
    .combo { margin: 4px 0 0 3px; width: 161px; height: 20px; background: #fff; border: 1px solid #ccc; border-radius: 2px; display: flex; align-items: center; }
    .combo div { width: 141px; padding-left: 3px; }
    .combo b { width: 18px; height: 18px; border-left: 1px solid #ddd; display: flex; align-items: center; justify-content: center; }
    .panel { margin: 2px 0 0 -3px; width: 550px; height: 236px; border: 2px solid #c2c4c8; }
    .hdash.in { margin: -1px 4px 0 0; background: repeating-linear-gradient(90deg, #a9b9d4 0 10px, #dfe5ef 10px 12px); }
    .small { height: 38px; width: 537px; margin-left: 4px; padding-top: 4px; font-size: 16.5px; }
    .area { position: relative; margin-left: 4px; width: 537px; background: #d8f0b8; }
    .blabel { font-family: "DejaVu Serif", serif; font-weight: 700; font-style: italic; }
    .tools { position: absolute; left: 10px; top: 10px; width: 28px; height: 103px; background: #f2f5ea; border: 1px solid #b5b8b0; display: flex; flex-direction: column; align-items: center; gap: 3px; padding-top: 2px; }
    .tool { width: 22px; height: 22px; display: flex; align-items: center; justify-content: center; }
    .sel { background: #e4e6e4; border: 1px solid #aaa; border-radius: 2px; }

    .tabs { height: 31px; background: #e6e6e6; border-top: 1px solid #c8c8c8; border-bottom: 1px solid #cdcdcd; display: grid; color: #666;
      grid-template-columns: 131px 28px 99px 99px 92px 92px 92px 91px 92px 102px 104px 104px 71px 73px 32px 32px 33px; }
    .tab { border-right: 1px solid #c8c8c8; display: flex; align-items: center; padding-left: 5px; overflow: hidden; }
    .ds { padding-left: 10px; gap: 6px; } .cut { justify-content: flex-end; padding: 0 10px 0 0; }
    .cut fit-text { margin-left: -12px; }
    .ico { padding-left: 6px; gap: 5px; } .nw { padding: 0 0 0 9px; }
    .act { background: #fcfcfc; color: #333; font-weight: 700; gap: 6px; }
    .status { height: 20px; background: #ebebeb; display: grid; grid-template-columns: 1000px 127px 27px 27px 47px 71px 67px; }
    .st { border-right: 1px solid #ccc; display: flex; align-items: center; }
    .user { gap: 8px; padding-left: 5px; color: #333; font-size: 12px; } .user .tri { margin-left: 5px; width: 8px; }

    .task { height: 40px; background: #101010; display: flex; font-family: "Open Sans", sans-serif; color: #fff; }
    .start { width: 48px; display: grid; place-items: center; }
    .search { width: 288px; background: #f3f3f3; border: 1px solid #bbb; display: flex; align-items: center; gap: 11px; padding-left: 10px; color: #333; font-size: 15px; }
    .app { width: 49px; height: 40px; display: flex; align-items: center; justify-content: center; position: relative; flex: none; }
    .view { width: 51px; padding-right: 2px; }
    .run::after { content: ""; position: absolute; left: 5px; right: 4px; bottom: 0; height: 2px; background: #f8b3d8; }
    .cur { background: #333; width: 48px; } .cur::after { left: 0; right: 0; }
    .mail::after { content: "10"; position: absolute; left: 27px; top: 18px; width: 18px; text-align: center; font-size: 10.5px; font-weight: 600; line-height: 18px; }
    .tray { margin-left: auto; display: flex; align-items: center; font-size: 14px; }
    .temp { margin-left: 8px; } .sky { margin: 0 23px 0 9px; }
    .tray .ic + .ic { margin-left: 9px; }
    .eng { margin-left: 10px; font-size: 12px; }
    .clock { width: 57px; margin: 0 6px 0 14px; display: flex; flex-direction: column; align-items: center; font-size: 12px; line-height: 18px; }
    .note { width: 40px; height: 40px; background: #1f1f1f; display: grid; place-items: center; }
    .peek { width: 1px; height: 40px; background: #555; margin: 0 4px 0 8px; }
  `;
  render() {
    const menu: [string, number][] = [["File", 18], ["Data", 24], ["Worksheet", 56], ["Dashboard", 57], ["Story", 27], ["Analysis", 43], ["Map", 24], ["Format", 38], ["Server", 32], ["Window", 44], ["Help", 25]];
    return html`
      <div class="strip"></div>
      <div class="bar">
        ${ic(2, 3, 16, 18, svg`<rect x="2" y="3" width="15" height="16" fill="#f4f4f4"/>${tableauMark(9.5, 10.5, 0.85, blues("#4b8fb8"))}<path d="M3 18.500h15M17.500 4v14" stroke="#999"/>`)}
        ${t("Tableau - Indian Agricultural Crop Production", 240)}
        <div class="win">${ic(1240, 2, 110, 20, svg`<path d="M1245 10.500h10" stroke="#000"/><path d="M1290.500 7.500h7v7h-7zM1292.500 7.500v-2h7v7h-2" stroke="#000"/><path d="M1336.500 5.500l9.500 9.500M1346 5.500l-9.500 9.500" stroke="#000" stroke-width="1.100"/>`)}</div>
      </div>
      <div class="menu">${menu.map(([m, w]) => t(m, w))}</div>
      <div class="toolbar">${toolbar()}</div>
      <div class="main">${sidebar()}${dashboard()}</div>
      ${tabs()}${status()}${taskbar()}
    `;
  }
}
